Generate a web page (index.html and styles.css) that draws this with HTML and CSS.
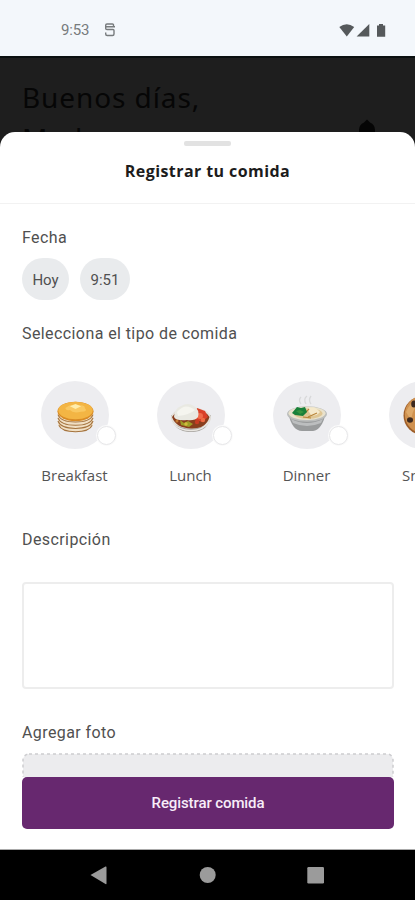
FILE: index.html
```html
<!DOCTYPE html>
<html lang="es">
<head>
<meta charset="utf-8">
<meta name="viewport" content="width=device-width, initial-scale=1">
<title>Registrar tu comida</title>
<link rel="stylesheet" href="styles.css">
</head>
<body>
<div class="screen">
  <header class="status">
    <span class="clock">9:53</span>
    <svg class="status-s" width="12" height="14" viewBox="0 0 12 14" fill="none" stroke="#777b7d" stroke-width="1.400"><path d="M9.500 3.500V2Q9.500 1 8.500 1H3Q1.700 1 1.700 2.300V5.500Q1.700 6.500 3 6.500H9Q10 6.500 10 7.500V11Q10 12.500 8.500 12.500H3.200Q1.700 12.500 1.700 11V9.500M2 3.800H11"/></svg>
    <svg class="status-icons" width="48" height="16" viewBox="0 0 48 16" fill="#55595b"><path d="M0.300 4Q7.700-1.600 15.200 4L7.800 13.500Z"/><path d="M30.300 1V13.500H17.600Z"/><path d="M38 2.500H40V1H44V2.500H46.200V13.700H38Z"/></svg>
  </header>
  <main class="content">
    <section class="greeting">
      <h1 class="hello">Buenos días,<br>Madu</h1>
      <svg class="bell" width="18" height="20" viewBox="0 0 18 20" fill="#050505"><path d="M6 3.500L9 .5L12 3.500Q17 5.500 17 11V15L18 18H0L1 15V11Q1 5.500 6 3.500Z"/></svg>
    </section>
    <section class="sheet">
      <div class="sheet-head">
        <div class="handle"></div>
        <h2 class="title">Registrar tu comida</h2>
      </div>
      <div class="form">
        <h3 class="label label-date">Fecha</h3>
        <div class="chips"><span class="chip chip-day">Hoy</span><span class="chip chip-time">9:51</span></div>
        <h3 class="label label-type">Selecciona el tipo de comida</h3>
        <div class="meals">
          <div class="meal">
            <div class="plate">
              <svg width="37" height="37" viewBox="0 0 40 40">
                <path d="M1 17V29C2 41 38 41 39 29V17Z" fill="#f0dfc4"/>
                <g fill="none" stroke="#a5743f" stroke-width="1.100"><path d="M1 19Q4 27 20 27T39 19"/><path d="M1 22.500Q4 30.500 20 30.500T39 22.500"/><path d="M1 26Q4 34 20 34T39 26"/><path d="M2 30.500Q5 37.500 20 37.500T38 30.500"/></g>
                <ellipse cx="20" cy="15.500" rx="19.500" ry="10.500" fill="#d98b25"/><ellipse cx="20" cy="14.500" rx="18.700" ry="9.500" fill="#f3b544"/>
                <path d="M9 12Q15 7 22 9Q31 8 30 12Q34 16 26 16Q17 18 14 14Q9 15 9 12Z" fill="#f9c862"/><path d="M14 10L20 7.500L26 10L20 13Z" fill="#ffedab"/>
              </svg>
              <i class="radio"></i>
            </div>
            <span class="meal-name">Breakfast</span>
          </div>
          <div class="meal">
            <div class="plate">
              <svg width="40" height="40" viewBox="0 0 40 40">
                <path d="M0 20Q2 37 20 37T40 20Z" fill="#a7a49f"/><ellipse cx="20" cy="23" rx="20" ry="10.500" fill="#e3dfd8"/><path d="M1 22Q5 33 20 33.500T38.500 22Q35 15 20 15T1 22Z" fill="#893e1d"/>
                <path d="M26 13L34 16L37 22L31 27L23 24Z" fill="#d94028"/><circle cx="29" cy="21" r="3" fill="#f06a49"/><circle cx="32" cy="25" r="2.200" fill="#ed6d43"/><circle cx="26" cy="27" r="2.200" fill="#c73c23"/>
                <path d="M9 25L13 28L17 26L22 29L18 32L10 30Z" fill="#9c9d26"/><circle cx="15" cy="29" r="1.700" fill="#d2bc3e"/><circle cx="6" cy="26" r="1.500" fill="#c37931"/>
                <path d="M3 22Q3 14 10 11Q17 7 23 11Q29 15 27 22Q24 26 16 25Q5 26 3 22Z" fill="#e9e9e2"/><path d="M6 17Q14 7 24 15Q18 20 7 21Z" fill="#f5f5ef"/>
                <path d="M2 28Q8 35.500 20 35.500T38 27" fill="none" stroke="#e9e6e1" stroke-width="1.500"/>
              </svg>
              <i class="radio"></i>
            </div>
            <span class="meal-name">Lunch</span>
          </div>
          <div class="meal">
            <div class="plate">
              <svg width="40" height="40" viewBox="0 0 40 40">
                <path d="M14 9Q11 5 14 2M19 9Q16 4 20 1M24 9Q21 5 24 1" fill="none" stroke="#d8d9da" stroke-width="1.300"/>
                <path d="M1.500 19Q5 35.500 15 36H26Q35 34.500 38.500 19Z" fill="#999b9c"/><path d="M4 24Q20 32 36 24L34 28Q20 34 6 28Z" fill="#bcbebf"/>
                <ellipse cx="20" cy="19" rx="20" ry="7.800" fill="#bbbdbc"/><ellipse cx="20" cy="18.300" rx="18.500" ry="6.700" fill="#e9e2cc"/><ellipse cx="21" cy="18.500" rx="14.500" ry="5.200" fill="#dfc694"/>
                <path d="M20 14Q27 10 33 17Q29 22 24 20Z" fill="#f5e9cb"/><path d="M18 18L22 14M21 22L30 18M16 22L24 23" stroke="#b88439" stroke-width="1.200"/>
                <path d="M5 18L10 12L14 13L18 12L20 17L16 21L8 20Z" fill="#188039"/><path d="M9 16L13 15L17 17L13 19Z" fill="#35943f"/>
              </svg>
              <i class="radio"></i>
            </div>
            <span class="meal-name">Dinner</span>
          </div>
          <div class="meal">
            <div class="plate">
              <svg width="40" height="40" viewBox="0 0 40 40">
                <circle cx="20" cy="20.500" r="19.500" fill="#9e5e29"/><circle cx="20.500" cy="19.500" r="18.700" fill="#cf914f"/><path d="M3 17Q8 4 21 3Q10 10 8 25Z" fill="#dea969"/>
                <g fill="#3d291f"><ellipse cx="11" cy="9" rx="2.800" ry="3.500"/><ellipse cx="7" cy="25" rx="3" ry="2.700"/><circle cx="19" cy="20" r="2.500"/><circle cx="17" cy="33" r="2.300"/><circle cx="28" cy="12" r="3"/></g>
              </svg>
              <i class="radio"></i>
            </div>
            <span class="meal-name">Snack</span>
          </div>
        </div>
        <h3 class="label label-desc">Descripción</h3>
        <textarea class="description" aria-label="Descripción"></textarea>
        <h3 class="label label-photo">Agregar foto</h3>
        <div class="photo"><svg width="372" height="40" viewBox="0 0 372 40"><rect x="1" y="1" width="370" height="70" rx="6" fill="#ececee" stroke="#cdcdd0" stroke-width="1.500" stroke-dasharray="3 3"/></svg></div>
        <button class="submit">Registrar comida</button>
      </div>
    </section>
  </main>
  <nav class="system-nav">
    <svg width="415" height="50" viewBox="0 0 415 50" fill="#9b9b9b"><path d="M90.500 25L105.500 16.500Q106.500 16 106.500 17.500V33.500Q106.500 34.500 105.500 34Z"/><circle cx="207.700" cy="25" r="8"/><rect x="307.300" y="17" width="16.700" height="16.500" rx="1.200"/></svg>
  </nav>
</div>
</body>
</html>
```

FILE: styles.css
```css
* { box-sizing: border-box; }
body { margin: 0; font-family: Roboto, sans-serif; color: #505050; background: #fff; }
h1, h2, h3 { margin: 0; font-weight: 400; }
.screen { width: 415px; height: 900px; display: flex; flex-direction: column; overflow: hidden; }
.status { height: 56px; flex: none; display: flex; align-items: flex-start; padding: 22px 28px 0 61px; background: #f3f7fb; }
.clock { width: 43px; font-size: 15px; line-height: 17px; color: #777b7d; letter-spacing: -.2px; }
.status-s { margin-top: 1px; }
.status-icons { margin: 1px 0 0 auto; }
.content { height: 794px; flex: none; display: flex; flex-direction: column; background: #1e1e1e; border-top: 2px solid #0b1010; }
.greeting { height: 74px; flex: none; display: flex; justify-content: space-between; overflow: hidden; padding: 19px 39px 0 22px; }
.hello { font: 400 28px/41px "Noto Sans", sans-serif; color: #060606; letter-spacing: .9px; }
.bell { margin-top: 42px; }
.sheet { flex: 1; min-height: 0; background: #fff; border-radius: 15px 15px 0 0; border-bottom: 1px solid #aaa; overflow: hidden; }
.sheet-head { height: 72px; display: flex; flex-direction: column; align-items: center; border-bottom: 1px solid #f2f2f2; padding-top: 9px; }
.handle { width: 47px; height: 5px; border-radius: 2px; background: #e2e2e2; }
.title { margin-top: 13px; font: 700 16px/24px "Open Sans", sans-serif; color: #1c1c1c; letter-spacing: .42px; }
.form { padding: 24px 21px 0 22px; display: flex; flex-direction: column; }
.label { font-size: 16px; line-height: 20px; letter-spacing: .41px; white-space: nowrap; }
.chips { display: flex; gap: 11px; margin-top: 10px; }
.chip { height: 42px; border-radius: 21px; background: #e9ebed; font-size: 15px; line-height: 44px; text-align: center; }
.chip-day { width: 47px; }
.chip-time { width: 50px; }
.label-type { margin-top: 24px; }
.meals { display: flex; gap: 12px; margin: 37px -21px 0 1px; overflow: hidden; }
.meal { width: 104px; flex: none; display: flex; flex-direction: column; align-items: center; }
.plate { position: relative; width: 68px; height: 68px; display: flex; align-items: center; justify-content: center; border-radius: 50%; background: #ededf0; }
.radio { position: absolute; left: 56px; top: 45px; width: 19px; height: 19px; border: 1.5px solid #e7e7e9; border-radius: 50%; background: #fff; box-shadow: 0 0 0 1px #fafafa; }
.meal-name { margin: 16px 1px 0 0; font: 400 15px/20px "Open Sans", sans-serif; color: #555; }
.label-desc { margin-top: 45px; }
.description { width: 372px; height: 107px; margin-top: 32px; padding: 12px; resize: none; border: 2px solid #ededed; border-radius: 4px; background: #fff; }
.label-photo { margin-top: 34px; }
.photo { height: 24px; margin-top: 10px; overflow: hidden; }
.photo svg { display: block; }
.submit { height: 52px; width: 372px; flex: none; border: 0; border-radius: 5px; background: #67286f; color: #f8edf9; font: 500 15px/52px Roboto, sans-serif; padding: 0; letter-spacing: -.1px; }
.system-nav { height: 50px; flex: none; background: #000; }
.system-nav svg { display: block; }
```
